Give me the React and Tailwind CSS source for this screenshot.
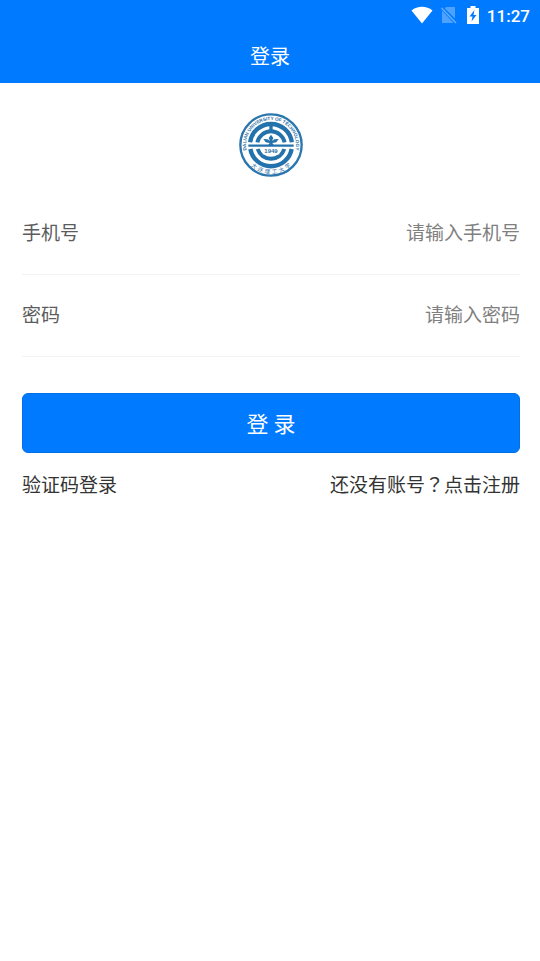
import { useState } from 'react';

const Emblem = () => (
  <svg viewBox="0 0 192 192" className="size-16" role="img" aria-label="Dalian University of Technology">
    <defs>
      <path id="ring-top" d="M 31 133.5 A 75 75 0 1 1 161 133.5" />
      <path id="ring-bottom" d="M 21.5 139 A 86 86 0 0 0 170.5 139" />
    </defs>
    <circle cx="96" cy="96" r="92" fill="#fff" stroke="#2b76ad" strokeWidth="7" />
    <g fill="none" stroke="#2472ab">
      <path d="M 33.5 88 A 63 63 0 0 1 158.5 88" strokeWidth="13" />
      <path d="M 34 108 A 63 63 0 0 0 158 108" strokeWidth="13" />
      <path d="M 55 88 A 42 42 0 0 1 137 88" strokeWidth="12" />
      <path d="M 56 108 A 42 42 0 0 0 136 108" strokeWidth="12" />
      <path d="M 28 98 H 164" strokeWidth="7" />
      <path d="M 96 28 V 60" strokeWidth="10" />
    </g>
    <path
      d="M 96 65 L 103 75 L 99 84 L 106 79 L 119 78 L 112 88 L 100 90 L 104 96 H 88 L 92 90 L 80 88 L 73 78 L 86 79 L 93 84 L 89 75 Z"
      fill="#2472ab"
    />
    <rect x="71" y="103" width="50" height="21" fill="#fff" />
    <g fill="#2b6ea3">
      <text fontSize="14" fontWeight="700" fontFamily="Liberation Sans, sans-serif">
        <textPath href="#ring-top" startOffset="50%" textAnchor="middle">
          DALIAN UNIVERSITY OF TECHNOLOGY
        </textPath>
      </text>
      <text fontSize="16" fontFamily="Noto Sans CJK SC, sans-serif">
        <textPath href="#ring-bottom" startOffset="50%" textAnchor="middle">
          {'大\u00a0\u00a0连\u00a0\u00a0理\u00a0\u00a0工\u00a0\u00a0大\u00a0\u00a0学'}
        </textPath>
      </text>
      <text x="96" y="121" fontSize="18" fontWeight="700" textAnchor="middle" fontFamily="Liberation Sans, sans-serif">
        1949
      </text>
    </g>
  </svg>
);

const StatusBar = () => (
  <div className="flex h-[30px] items-center justify-end pr-2.5">
    <svg viewBox="0 0 22 18" className="mr-2 h-[18px] w-[22px]" aria-hidden="true">
      <path d="M 0.5 4.5 C 6.5 -0.5 15.5 -0.5 21.5 4.5 L 11 17.5 Z" fill="#fff" />
    </svg>
    <svg viewBox="0 0 16 18" className="mr-2.5 h-[18px] w-4" aria-hidden="true">
      <path d="M 5 1 H 14 V 12.5 L 3.8 2.5 Z M 1 4.6 L 12.6 17 H 1 Z" fill="#4da2ff" />
      <path d="M 0.5 2 L 15 17" stroke="#66afff" strokeWidth="1.4" />
    </svg>
    <svg viewBox="0 0 12 18" className="mr-2 h-[18px] w-3" aria-hidden="true">
      <path d="M 3.5 0 H 8.5 V 2 H 12 V 18 H 0 V 2 H 3.5 Z" fill="#fff" />
      <path d="M 7.5 4 L 2.5 10.5 H 5.5 L 4.5 15.5 L 9.5 9 H 6.5 Z" fill="#007aff" />
    </svg>
    <span className="pt-px font-['Roboto',sans-serif] text-[17px] leading-5 font-medium">11:27</span>
  </div>
);

const Field = ({ id, label, ...props }) => (
  <div className="flex h-[82px] items-center border-b border-[#f3f3f3] pb-1">
    <label htmlFor={id} className="shrink-0 text-[#5c5c5c]">{label}</label>
    <input
      id={id}
      className="min-w-0 flex-1 bg-transparent text-right text-[#333] placeholder:text-[#808080] outline-none"
      {...props}
    />
  </div>
);

export default function App() {
  const [phone, setPhone] = useState('');
  const [password, setPassword] = useState('');

  return (
    <div className="min-h-screen bg-white font-['Noto_Sans_CJK_SC',sans-serif] text-[19px] leading-7 text-[#333]">
      <header className="bg-[#007aff] text-white">
        <StatusBar />
        <h1 className="pt-3 pb-[13px] text-center text-xl leading-7 font-normal">登录</h1>
      </header>

      <main className="pr-5 pl-[22px]">
        <div className="flex justify-center pt-[30px] pb-4">
          <Emblem />
        </div>

        <form onSubmit={(e) => e.preventDefault()}>
          <Field
            id="phone"
            label="手机号"
            type="tel"
            placeholder="请输入手机号"
            value={phone}
            onChange={(e) => setPhone(e.target.value)}
          />
          <Field
            id="password"
            label="密码"
            type="password"
            placeholder="请输入密码"
            value={password}
            onChange={(e) => setPassword(e.target.value)}
          />
          <button
            type="submit"
            className="mt-9 block h-[60px] w-full rounded-md border border-[#0070e8] bg-[#007aff] pb-0.5 text-[22px] text-white"
          >
            登 录
          </button>
        </form>

        <div className="flex justify-between pt-[17px]">
          <a href="#code">验证码登录</a>
          <a href="#register">
            还没有账号<span className="font-['Noto_Sans_CJK_TC',sans-serif]">？</span>点击注册
          </a>
        </div>
      </main>
    </div>
  );
}
